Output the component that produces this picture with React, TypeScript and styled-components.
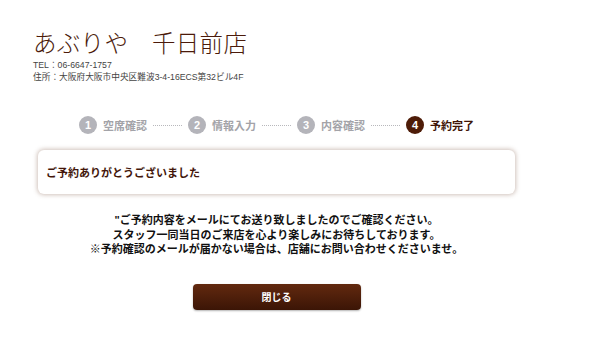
import React from 'react';
import styled, { createGlobalStyle } from 'styled-components';

const steps = [
  { no: 1, label: '空席確認' },
  { no: 2, label: '情報入力' },
  { no: 3, label: '内容確認' },
  { no: 4, label: '予約完了' },
];
const current = 4;

const GlobalStyle = createGlobalStyle`
  html, body {
    margin: 0;
    padding: 0;
    background: #fff;
  }
  body {
    font-family: "Liberation Sans", "Noto Sans CJK JP", sans-serif;
  }
`;

const App: React.FC = () => {
  return (
    <>
      <GlobalStyle />
      <Page>
        <Header>
          <ShopName>あぶりや　千日前店</ShopName>
          <Info>
            <InfoLine>TEL：06-6647-1757</InfoLine>
            <InfoLine>住所：大阪府大阪市中央区難波3-4-16ECS第32ビル4F</InfoLine>
          </Info>
        </Header>
        <Main>
          <Steps>
            {steps.map((s, i) => (
              <React.Fragment key={s.no}>
                {i > 0 && <Dots />}
                <Step>
                  <StepNo active={s.no === current}>{s.no}</StepNo>
                  <StepLabel active={s.no === current}>{s.label}</StepLabel>
                </Step>
              </React.Fragment>
            ))}
          </Steps>
          <Card>
            <CardTitle>ご予約ありがとうございました</CardTitle>
          </Card>
          <Message>
            "ご予約内容をメールにてお送り致しましたのでご確認ください。<br />
            スタッフ一同当日のご来店を心より楽しみにお待ちしております。<br />
            ※予約確認のメールが届かない場合は、店舗にお問い合わせくださいませ。
          </Message>
          <CloseButton>閉じる</CloseButton>
        </Main>
      </Page>
    </>
  );
};

const Page = styled.div`
  width: 600px;
  min-height: 359px;
`;

const Header = styled.header`
  padding: 27px 33px 0;
`;

const ShopName = styled.h1`
  margin: 0;
  font-family: "Noto Sans CJK JP", serif;
  font-weight: 300;
  font-size: 23.5px;
  line-height: 30px;
  letter-spacing: 0.3px;
  color: #4b1a0a;
`;

const Info = styled.div`
  margin-top: 2px;
`;

const InfoLine = styled.div`
  font-size: 8.7px;
  line-height: 12px;
  color: #444;
`;

const Main = styled.main`
  width: 477px;
  margin-left: 38px;
  display: flex;
  flex-direction: column;
  align-items: center;
`;

const Steps = styled.div`
  margin-top: 33px;
  height: 18px;
  display: flex;
  align-items: center;
  gap: 6px;
`;

const Step = styled.div`
  display: flex;
  align-items: center;
  gap: 6px;
`;

const StepNo = styled.span<{ active: boolean }>`
  width: 18px;
  height: 18px;
  border-radius: 50%;
  background: ${p => (p.active ? '#4e1c08' : '#b4b4ba')};
  color: #fff;
  font-size: 11px;
  font-weight: 700;
  display: flex;
  align-items: center;
  justify-content: center;
`;

const StepLabel = styled.span<{ active: boolean }>`
  font-size: 11px;
  font-weight: 700;
  color: ${p => (p.active ? '#3e1506' : '#a3a3a8')};
`;

const Dots = styled.span`
  width: 29px;
  border-top: 1px dotted #b8b8bc;
`;

const Card = styled.section`
  box-sizing: border-box;
  margin-top: 16px;
  width: 477px;
  height: 44px;
  padding: 0 8px;
  display: flex;
  align-items: center;
  background: #fff;
  border-radius: 6px;
  box-shadow: 0 0 4px 1px rgba(120, 80, 60, 0.35);
`;

const CardTitle = styled.h2`
  margin: 0;
  font-size: 11px;
  font-weight: 700;
  color: #43160a;
`;

const Message = styled.p`
  margin: 19px 0 0;
  text-align: center;
  font-size: 11px;
  line-height: 14.5px;
  font-weight: 600;
  color: #111;
`;

const CloseButton = styled.button`
  margin-top: 27px;
  width: 168px;
  height: 26px;
  border: none;
  border-radius: 4px;
  background: linear-gradient(to bottom, #62290f 0%, #3b1506 100%);
  box-shadow: 0 1px 2px rgba(0, 0, 0, 0.3);
  color: #fff;
  font-family: "Liberation Sans", "Noto Sans CJK JP", sans-serif;
  font-size: 10px;
  font-weight: 700;
  cursor: pointer;
`;

export default App;
